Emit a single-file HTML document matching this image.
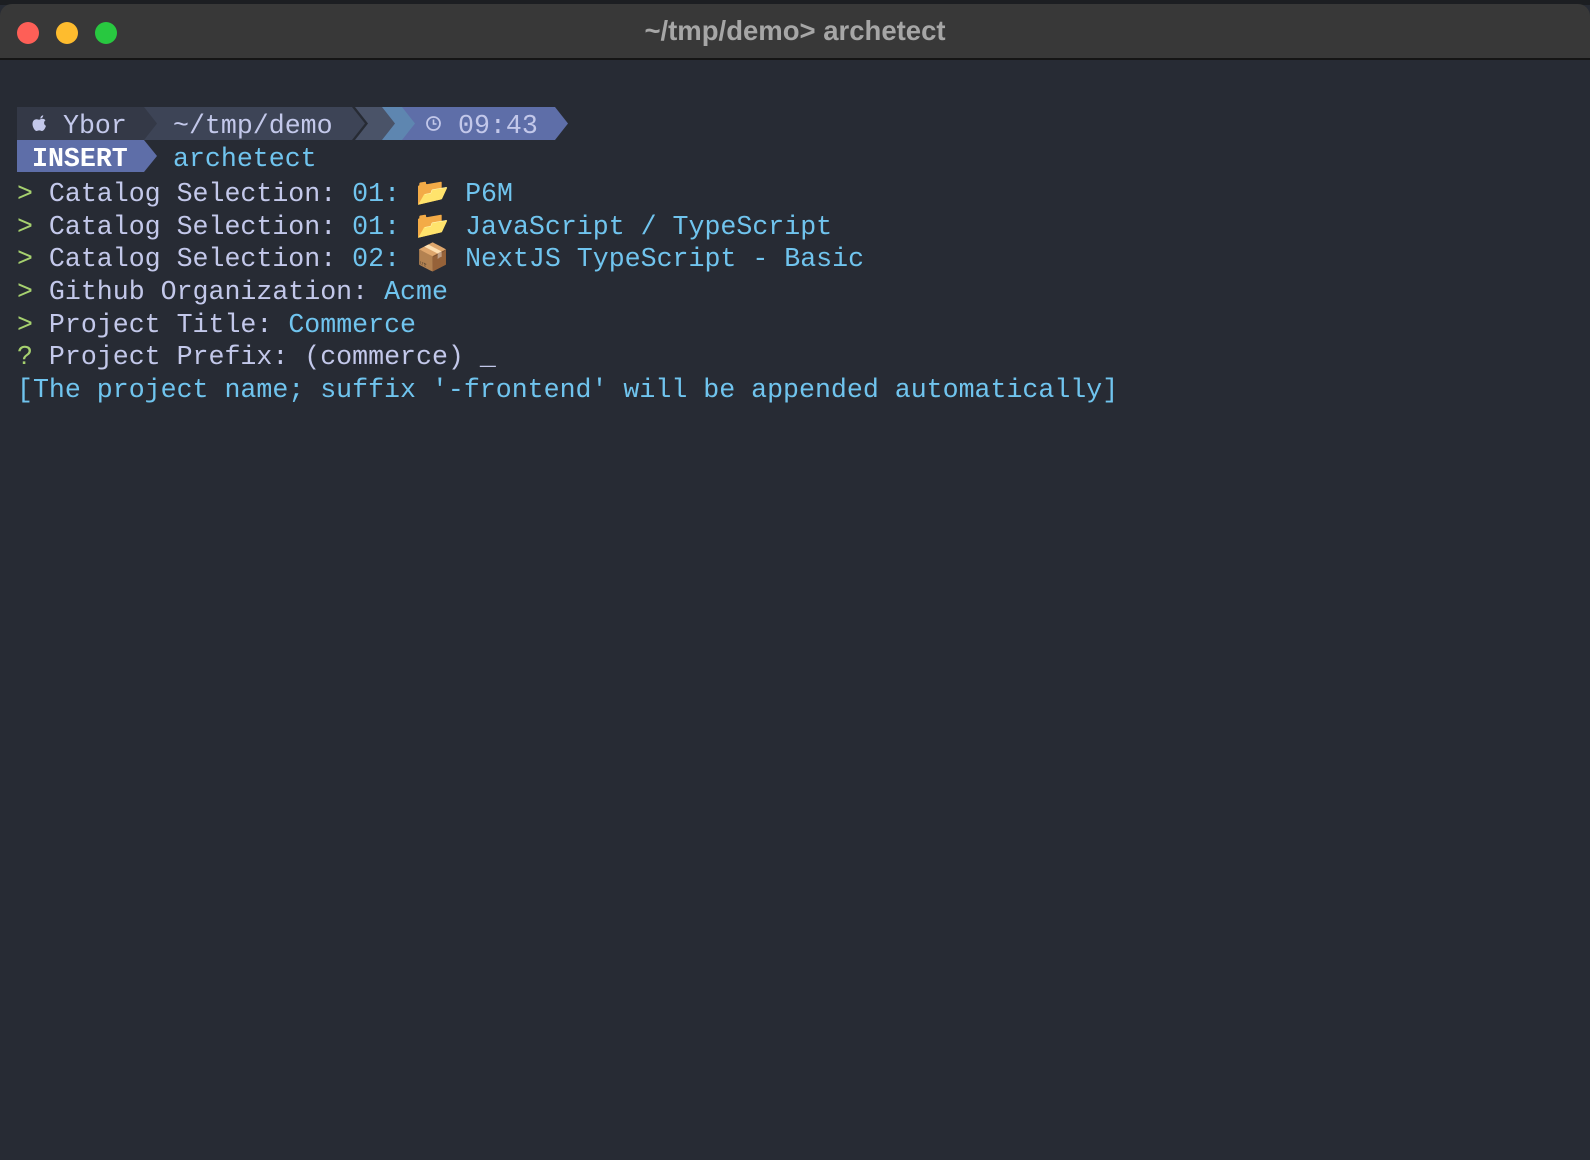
<!DOCTYPE html>
<html><head><meta charset="utf-8"><style>
*{margin:0;padding:0;box-sizing:border-box}
html,body{width:1590px;height:1160px;overflow:hidden;background:#272b34}
.top{position:absolute;left:0;top:0;width:1590px;height:5px;background:#1c1e22}
.title{position:absolute;left:0;top:4px;width:1590px;height:56px;background:#383838;border-top-left-radius:12px;border-top-right-radius:12px;border-bottom:2px solid #151515}
.dot{position:absolute;top:18px;width:22px;height:22px;border-radius:50%}
.ttext{position:absolute;left:0;width:1590px;top:11px;text-align:center;font:bold 27.5px "Liberation Sans",sans-serif;color:#a6a6a6}
.seg{position:absolute;height:33px}
.t{position:absolute;font-family:"Liberation Mono","DejaVu Sans Mono",monospace;font-size:26.6px;white-space:pre;line-height:33px;margin-top:3px}
.l{position:absolute;left:17px;font-family:"Liberation Mono","DejaVu Sans Mono",monospace;font-size:26.6px;white-space:pre;line-height:32.7px;color:#c3c8ea;margin-top:5px}
.g{color:#a6d16f}.b{color:#70c4ee}
</style></head><body>
<div class="top"></div>
<div class="title">
<div class="dot" style="left:17px;background:#fe5f57"></div>
<div class="dot" style="left:56px;background:#febc2e"></div>
<div class="dot" style="left:95px;background:#28c840"></div>
<div class="ttext">~/tmp/demo&gt; archetect</div>
</div>
<div class="seg" style="top:107px;left:380px;width:188px;background:#5e6ea8;clip-path:polygon(0 0,175px 0,188px 50%,175px 100%,0 100%)"></div>
<div class="seg" style="top:107px;left:368px;width:47px;background:#5e86b0;clip-path:polygon(0 0,34px 0,47px 50%,34px 100%,0 100%,13px 50%)"></div>
<div class="seg" style="top:107px;left:355px;width:40px;background:#4a5368;clip-path:polygon(0 0,27px 0,40px 50%,27px 100%,0 100%,13px 50%)"></div>
<div class="seg" style="top:107px;left:144px;width:221px;background:#3d4456;clip-path:polygon(0 0,208px 0,221px 50%,208px 100%,0 100%)"></div>
<div class="seg" style="top:107px;left:17px;width:140px;background:#343947;clip-path:polygon(0 0,127px 0,140px 50%,127px 100%,0 100%)"></div>
<svg style="position:absolute;left:31px;top:114px" width="18" height="20" viewBox="0 0 18 20"><path d="M9 5.5C10.5 4.5 13 4.3 14.5 6.3 12.5 7.6 12.6 10.8 15 11.8 14.3 14 12.8 17 11 17 9.8 17 9.5 16.4 8.3 16.4 7 16.4 6.6 17 5.5 17 3.6 17 1.5 12.8 1.5 10 1.5 6.8 3.6 5.3 5.4 5.3 6.8 5.3 7.8 6 9 5.5Z M9.3 4.6C9.3 2.8 10.7 1.3 12.2 1.2 12.3 3 10.8 4.6 9.3 4.6Z" fill="#c3c8ea"/></svg>
<div class="t" style="top:107px;left:63px;color:#c3c8ea">Ybor</div>
<div class="t" style="top:107px;left:173px;color:#c3c8ea">~/tmp/demo</div>
<svg style="position:absolute;left:425px;top:115px" width="17" height="17" viewBox="0 0 17 17"><circle cx="8.5" cy="8.5" r="6.5" fill="none" stroke="#c3c8ea" stroke-width="1.8"/><path d="M8.5 4.5V9H11.5" fill="none" stroke="#c3c8ea" stroke-width="1.6"/></svg>
<div class="t" style="top:107px;left:458px;color:#c3c8ea">09:43</div>
<div class="seg" style="top:140px;left:17px;width:140px;height:32px;background:#5e6ea8;clip-path:polygon(0 0,127px 0,140px 50%,127px 100%,0 100%)"></div>
<div class="t" style="top:140px;left:32px;color:#fff;font-weight:bold">INSERT</div>
<div class="t" style="top:140px;left:173px;color:#70c4ee">archetect</div>
<div class="l" style="top:173px"><span class="g">&gt;</span> Catalog Selection: <span class="b">01: 📂 P6M</span></div>
<div class="l" style="top:205.7px"><span class="g">&gt;</span> Catalog Selection: <span class="b">01: 📂 JavaScript / TypeScript</span></div>
<div class="l" style="top:238.4px"><span class="g">&gt;</span> Catalog Selection: <span class="b">02: 📦 NextJS TypeScript - Basic</span></div>
<div class="l" style="top:271px"><span class="g">&gt;</span> Github Organization: <span class="b">Acme</span></div>
<div class="l" style="top:303.7px"><span class="g">&gt;</span> Project Title: <span class="b">Commerce</span></div>
<div class="l" style="top:336.4px"><span class="g">?</span> Project Prefix: (commerce) _</div>
<div class="l b" style="top:369px">[The project name; suffix '-frontend' will be appended automatically]</div>
</body></html>
